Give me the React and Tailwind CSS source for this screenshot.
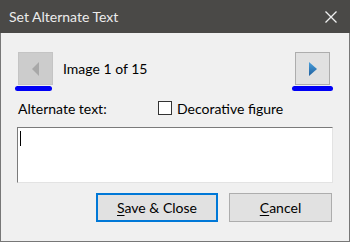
export default function App() {
  return (
    <div className="w-[350px] h-[242px] flex flex-col bg-[#f0f0f0] text-[#000] overflow-hidden" style={{ fontFamily: 'Lato, "Noto Sans", sans-serif' }}>
      <div className="h-[33px] shrink-0 bg-[#4a4947] flex items-center justify-between pl-[9px] pr-[13px]">
        <span className="text-[14px] text-[#ececec] leading-none">Set Alternate Text</span>
        <svg width="12" height="12" viewBox="0 0 12 12" className="mt-[1px]">
          <path d="M0.5 0.5 L11.5 11.5 M11.5 0.5 L0.5 11.5" stroke="#f0f0f0" strokeWidth="1.3" />
        </svg>
      </div>
      <div className="flex-1 flex flex-col border border-t-0 border-[#777] px-[16px]">
        <div className="flex items-start justify-between mt-[19px]">
          <div className="flex items-center">
            <div className="flex flex-col items-start">
              <div className="w-[35px] h-[33px] ml-[1px] bg-[#cccccc] border border-[#c4c4c4] flex items-center justify-center">
                <svg width="8" height="14" viewBox="0 0 8 14">
                  <path d="M7 0 L0 7 L7 14 Z" fill="#a8a8a8" />
                </svg>
              </div>
              <div className="w-[37px] h-[5px] -ml-[2px] rounded-full bg-[#0000f5] mt-[1px]"></div>
            </div>
            <span className="text-[14px] ml-[10px] -mt-[6px]">Image 1 of 15</span>
          </div>
          <div className="flex flex-col items-center">
            <div className="w-[35px] h-[33px] bg-[#e1e1e1] border border-[#adadad] flex items-center justify-center">
              <svg width="8" height="14" viewBox="0 0 8 14">
                <defs>
                  <linearGradient id="g" x1="0" y1="0" x2="0" y2="1">
                    <stop offset="0" stopColor="#4aa0dc" />
                    <stop offset="1" stopColor="#1f5f9e" />
                  </linearGradient>
                </defs>
                <path d="M0 0 L8 7 L0 14 Z" fill="url(#g)" />
              </svg>
            </div>
            <div className="w-[41px] h-[5px] rounded-full bg-[#0000f5] mt-[1px]"></div>
          </div>
        </div>
        <div className="flex items-center mt-[8px] h-[18px]">
          <span className="text-[14px] ml-[1px] w-[140px]">Alternate text:</span>
          <div className="w-[14px] h-[14px] border border-[#333] bg-white"></div>
          <span className="text-[14px] ml-[5px]">Decorative figure</span>
        </div>
        <div className="mt-[10px] w-[316px] h-[56px] bg-white border border-[#e3e3e3] border-t-[#7a7a7a] border-l-[#7a7a7a] relative">
          <div className="absolute left-[2px] top-[3px] w-[1px] h-[15px] bg-black"></div>
        </div>
        <div className="flex justify-end mt-[10px] gap-[11px] pr-[1px]">
          <div className="w-[122px] h-[29px] bg-[#e1e1e1] border-2 border-[#0078d7] flex items-center justify-center text-[14px]">
            <span><span className="underline underline-offset-2">S</span>ave &amp; Close</span>
          </div>
          <div className="w-[103px] h-[29px] bg-[#e1e1e1] border border-[#adadad] flex items-center justify-center text-[14px]">
            <span><span className="underline underline-offset-2">C</span>ancel</span>
          </div>
        </div>
      </div>
    </div>
  );
}
